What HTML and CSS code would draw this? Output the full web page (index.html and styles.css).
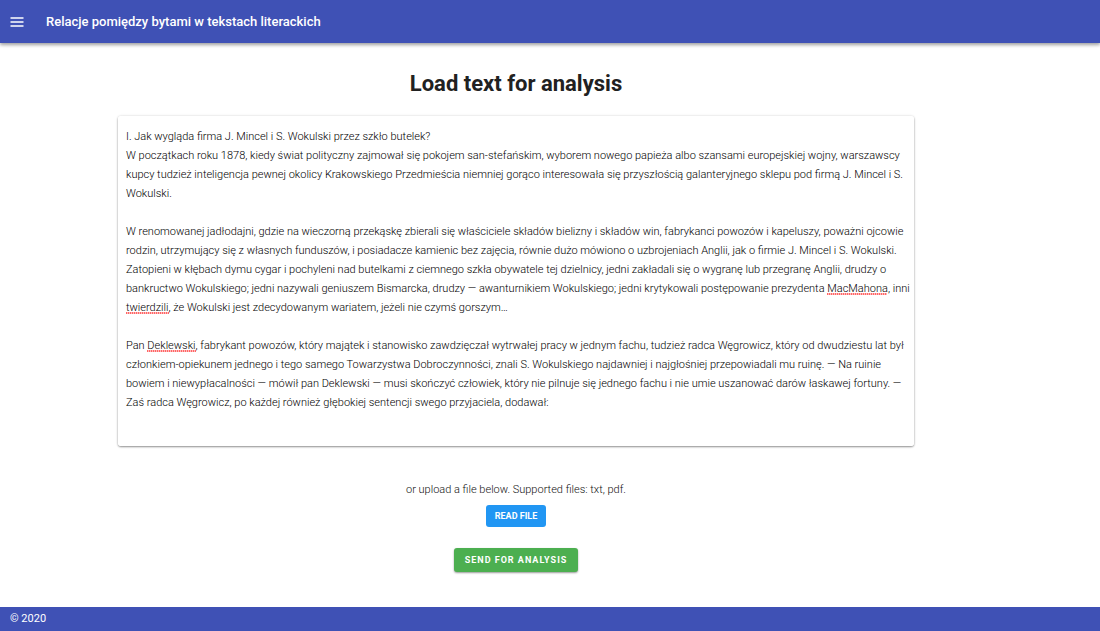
FILE: index.html
```html
<!DOCTYPE html>
<html lang="pl">
<head>
<meta charset="utf-8">
<meta name="viewport" content="width=device-width, initial-scale=1">
<title>Relacje pomiędzy bytami w tekstach literackich</title>
<link rel="stylesheet" href="styles.css">
</head>
<body>
<header class="app-bar">
  <button class="menu-button" type="button" aria-label="Menu">
    <svg width="14" height="10" viewBox="0 0 14 10" aria-hidden="true"><path d="M0.5 1H13.5M0.5 5H13.5M0.5 9H13.5" stroke="currentColor" stroke-width="1.4"/></svg>
  </button>
  <span class="app-title">Relacje pomiędzy bytami w tekstach literackich</span>
</header>
<main class="page">
  <form class="content">
    <h1 class="heading" id="heading">Load text for analysis</h1>
    <div class="editor">
      <textarea class="editor-text" aria-labelledby="heading" spellcheck="false">I. Jak wygląda firma J. Mincel i S. Wokulski przez szkło butelek?
W początkach roku 1878, kiedy świat polityczny zajmował się pokojem san-stefańskim, wyborem nowego papieża albo szansami europejskiej wojny, warszawscy kupcy tudzież inteligencja pewnej okolicy Krakowskiego Przedmieścia niemniej gorąco interesowała się przyszłością galanteryjnego sklepu pod firmą J. Mincel i S. Wokulski.

W renomowanej jadłodajni, gdzie na wieczorną przekąskę zbierali się właściciele składów bielizny i składów win, fabrykanci powozów i kapeluszy, poważni ojcowie rodzin, utrzymujący się z własnych funduszów, i posiadacze kamienic bez zajęcia, równie dużo mówiono o uzbrojeniach Anglii, jak o firmie J. Mincel i S. Wokulski. Zatopieni w kłębach dymu cygar i pochyleni nad butelkami z ciemnego szkła obywatele tej dzielnicy, jedni zakładali się o wygranę lub przegranę Anglii, drudzy o bankructwo Wokulskiego; jedni nazywali geniuszem Bismarcka, drudzy — awanturnikiem Wokulskiego; jedni krytykowali postępowanie prezydenta MacMahona, inni twierdzili, że Wokulski jest zdecydowanym wariatem, jeżeli nie czymś gorszym…

Pan Deklewski, fabrykant powozów, który majątek i stanowisko zawdzięczał wytrwałej pracy w jednym fachu, tudzież radca Węgrowicz, który od dwudziestu lat był członkiem-opiekunem jednego i tego samego Towarzystwa Dobroczynności, znali S. Wokulskiego najdawniej i najgłośniej przepowiadali mu ruinę. — Na ruinie bowiem i niewypłacalności — mówił pan Deklewski — musi skończyć człowiek, który nie pilnuje się jednego fachu i nie umie uszanować darów łaskawej fortuny. — Zaś radca Węgrowicz, po każdej również głębokiej sentencji swego przyjaciela, dodawał:</textarea>
      <span class="squiggle squiggle-macmahona"></span>
      <span class="squiggle squiggle-twierdzili"></span>
      <span class="squiggle squiggle-deklewski"></span>
    </div>
    <p class="hint">or upload a file below. Supported files: txt, pdf.</p>
    <button class="button read-button" type="button">READ FILE</button>
    <button class="button send-button" type="submit">SEND FOR ANALYSIS</button>
  </form>
</main>
<footer class="footer">© 2020</footer>
</body>
</html>
```

FILE: styles.css
```css
* {
  box-sizing: border-box;
}

body {
  display: flex;
  flex-direction: column;
  min-height: 100vh;
  margin: 0;
  background: #fff;
  color: #111;
  font-family: Roboto, "Noto Sans", sans-serif;
  font-size: 11px;
  font-weight: 300;
  line-height: 19px;
}

.app-bar {
  display: flex;
  align-items: center;
  gap: 16px;
  height: 43px;
  padding: 0 4px;
  background: #3f51b5;
  color: #fff;
  box-shadow: 0 2px 3px rgba(0, 0, 0, 0.3), 0 1px 6px rgba(0, 0, 0, 0.12);
}

.menu-button {
  display: grid;
  place-items: center;
  width: 26px;
  height: 32px;
  padding: 0;
  border: 0;
  background: transparent;
  color: inherit;
}

.app-title {
  font-size: 13px;
  font-weight: 500;
}

.page {
  display: grid;
  flex: 1;
  grid-template-columns: 118fr 796fr 186fr;
}

.content {
  display: flex;
  grid-column: 2;
  flex-direction: column;
  align-items: center;
  padding-bottom: 34px;
}

.heading {
  margin: 25px 0 16px;
  color: #212121;
  font-size: 22px;
  font-weight: 700;
  line-height: 32px;
}

.editor {
  position: relative;
  align-self: stretch;
  height: 330px;
  border-radius: 3px;
  box-shadow: 0 1px 2px rgba(0, 0, 0, 0.4), 0 0 3px rgba(0, 0, 0, 0.12);
}

.editor-text {
  display: block;
  width: 100%;
  height: 100%;
  padding: 11px 2px 11px 8px;
  border: 0;
  border-radius: 3px;
  outline: 0;
  overflow: hidden;
  resize: none;
  background: #fff;
  color: #000;
  font: inherit;
}

.squiggle {
  position: absolute;
  height: 2px;
  background: repeating-linear-gradient(90deg, #f66 0 1px, #fbb 1px 2px);
}

.squiggle-macmahona {
  top: 177px;
  left: 709px;
  width: 60px;
}

.squiggle-twierdzili {
  top: 196px;
  left: 8px;
  width: 43px;
}

.squiggle-deklewski {
  top: 234px;
  left: 29px;
  width: 49px;
}

.hint {
  margin: 34px 0 6px;
}

.button {
  border: 0;
  border-radius: 3px;
  color: #fff;
  font: 700 9px/16px Roboto, sans-serif;
}

.read-button {
  padding: 3px 9px;
  background: #2196f3;
}

.send-button {
  margin-top: 21px;
  padding: 4px 11px;
  background: #4caf50;
  box-shadow: 0 1px 2px rgba(0, 0, 0, 0.4);
  letter-spacing: 1px;
}

.footer {
  padding: 2px 10px 3px;
  background: #3f51b5;
  color: #fff;
  font-weight: 400;
}
```
